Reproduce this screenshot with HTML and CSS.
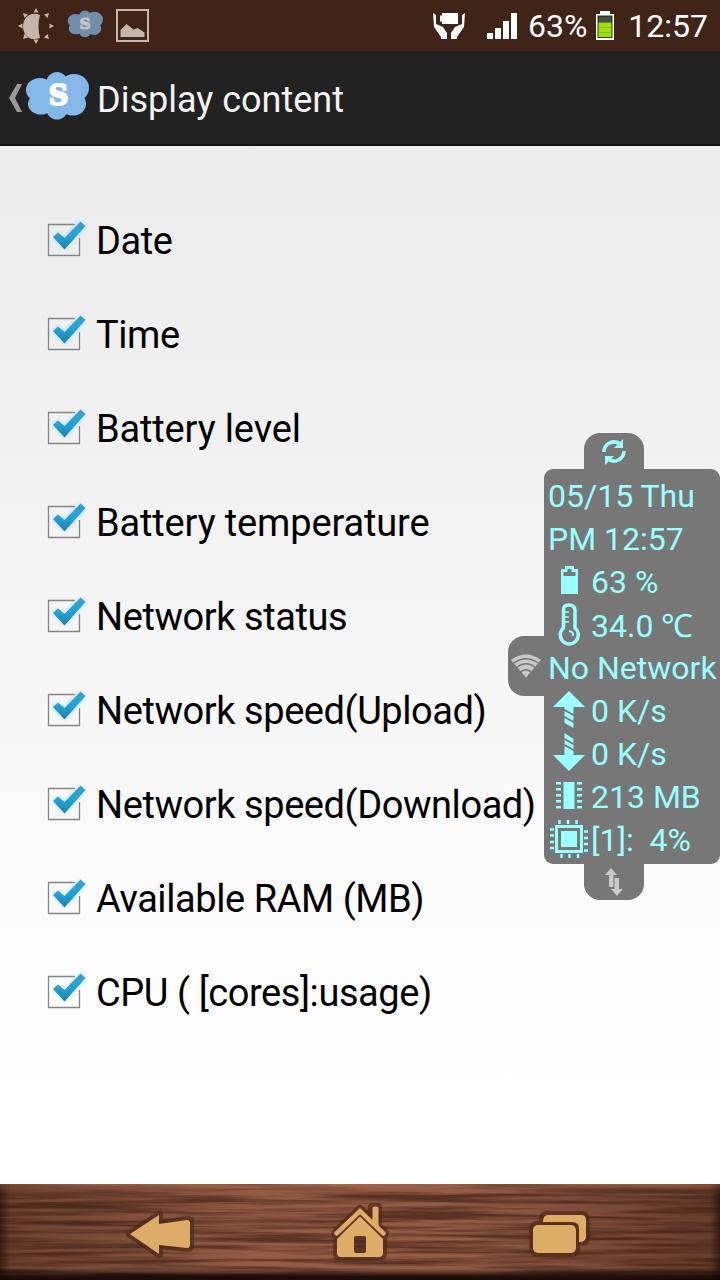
FILE: index.html
```html
<!DOCTYPE html>
<html lang="en">
<head>
<meta charset="utf-8">
<meta name="viewport" content="width=device-width, initial-scale=1">
<title>Display content</title>
<link rel="stylesheet" href="styles.css">
</head>
<body>

<!-- shared shapes -->
<svg class="defs" width="0" height="0">
  <defs>
    <linearGradient id="tick" x1="0" y1="0" x2="0" y2="1">
      <stop offset="0" stop-color="#3a9fca"/>
      <stop offset=".5" stop-color="#1ea4d8"/>
      <stop offset="1" stop-color="#2380a8"/>
    </linearGradient>
    <filter id="glow" x="-30%" y="-30%" width="160%" height="160%">
      <feGaussianBlur stdDeviation="2.5"/>
    </filter>
  </defs>
  <symbol id="check" viewBox="0 0 48 48">
    <path d="M31 8.500H4.500V39.500H35.500V22" fill="none" stroke="#858585" stroke-width="1.300"/>
    <path d="M9 21l5-4 6 6L36 6l5 4-20 23z" fill="#7fd0f5" opacity=".65" filter="url(#glow)"/>
    <path d="M9 21l5-4.500 6.500 5.500L36.500 5.500l5 4.500L20.500 33.500z" fill="url(#tick)"/>
  </symbol>
  <symbol id="cloud" viewBox="0 0 64 50">
    <g fill="#83b8e8">
      <ellipse cx="15" cy="19" rx="14" ry="12"/>
      <ellipse cx="32" cy="13" rx="11" ry="12"/>
      <ellipse cx="49" cy="17" rx="15" ry="14"/>
      <ellipse cx="16" cy="33" rx="13" ry="10.500"/>
      <ellipse cx="32" cy="37" rx="11" ry="11.500"/>
      <ellipse cx="48" cy="33" rx="13" ry="11.500"/>
      <rect x="12" y="12" width="40" height="26"/>
    </g>
  </symbol>
</svg>

<div class="screen">

  <div class="statusbar">
    <div class="notifications">
      <svg width="36" height="36" viewBox="0 0 36 36" fill="#c6b5ac">
        <path d="M22 7C12 3 5 10 5 18.500S12 34 22 30Q19 18 22 7z"/>
        <path d="M15.500 4.500L18 0l2.500 4.500zM15.500 31.500L18 36l2.500-4.500zM4.500 15.500L0 18l4.500 2.500zM31.500 15.500L36 18l-4.500 2.500zM5 5l5 1.500L6.500 10zM31 5l-1.500 5L26 6.500zM31 31l-5-1.500 3.500-3.500zM5 31l1.500-5 3.500 3.500z"/>
      </svg>
      <svg class="dim" width="36" height="28" viewBox="0 0 64 50">
        <use href="#cloud" width="64" height="50"/>
        <text x="32.500" y="34" text-anchor="middle" class="cloud-letter">S</text>
      </svg>
      <svg width="33" height="33" viewBox="0 0 33 33">
        <rect x="1" y="1" width="31" height="31" fill="none" stroke="#c6b5ac" stroke-width="2"/>
        <path d="M4.500 28v-7l6-6 7 5.500 4-1.500 7 4.500V28z" fill="#c6b5ac"/>
      </svg>
    </div>
    <div class="system">
      <svg class="saver" width="34" height="28" viewBox="0 0 34 28" fill="#fff">
        <path d="M10 1h16v11H10v-2.500H8v-6h2zM1 1l3 2v9l7 3 4 6v6H9v-2L2 15zM33 1l-3 2v9l-7 3-4 6v6h6v-2l7-10z"/>
      </svg>
      <svg class="signal" width="30" height="28" viewBox="0 0 30 28" fill="#fff">
        <path d="M0 21h6v6H0zM8 16h6v11H8zM16 9h6v18h-6zM24 1h6v26h-6z"/>
      </svg>
      <span class="percent">63%</span>
      <svg class="battery" width="20" height="31" viewBox="0 0 20 31">
        <path d="M5 1h10v3h4v26H1V4h4z" fill="#fff"/>
        <rect x="2.500" y="5.500" width="15" height="22.500" fill="#28400b"/>
        <rect x="4" y="7" width="12" height="5" fill="#4b4b48"/>
        <rect x="3.500" y="12.500" width="13" height="14.500" fill="#9de00b"/>
        <path d="M4 17.500h12M4 22.500h12" stroke="#86c908"/>
      </svg>
      <span class="clock">12:57</span>
    </div>
  </div>

  <div class="appbar">
    <svg class="up" width="14" height="28" viewBox="0 0 14 28"><path d="M8 0h5L6 14l7 14H8L0 14z" fill="#999"/></svg>
    <svg class="logo" width="64" height="50" viewBox="0 0 64 50">
      <use href="#cloud" width="64" height="50"/>
      <text x="33.500" y="34" text-anchor="middle" class="cloud-letter">S</text>
    </svg>
    <h1>Display content</h1>
  </div>

  <ul class="options">
    <li class="tight"><svg class="checkbox"><use href="#check"/></svg><span>Date</span></li>
    <li class="tight"><svg class="checkbox"><use href="#check"/></svg><span>Time</span></li>
    <li><svg class="checkbox"><use href="#check"/></svg><span>Battery level</span></li>
    <li><svg class="checkbox"><use href="#check"/></svg><span>Battery temperature</span></li>
    <li class="tight"><svg class="checkbox"><use href="#check"/></svg><span>Network status</span></li>
    <li class="tight"><svg class="checkbox"><use href="#check"/></svg><span>Network speed(Upload)</span></li>
    <li class="tight"><svg class="checkbox"><use href="#check"/></svg><span>Network speed(Download)</span></li>
    <li class="tight"><svg class="checkbox"><use href="#check"/></svg><span>Available RAM (MB)</span></li>
    <li class="tight"><svg class="checkbox"><use href="#check"/></svg><span>CPU ( [cores]:usage)</span></li>
  </ul>

  <div class="navbar">
    <svg class="wood" width="720" height="96" viewBox="0 0 720 96">
      <defs>
        <filter id="grain" x="0" y="0" width="100%" height="100%" color-interpolation-filters="sRGB">
          <feTurbulence type="fractalNoise" baseFrequency=".006 .2" numOctaves="5" seed="21"/>
          <feColorMatrix values="0 0 0 0 .24  0 0 0 0 .11  0 0 0 0 .07  3 0 0 0 -1.100"/>
        </filter>
        <linearGradient id="sides">
          <stop offset="0" stop-color="#1a0a05" stop-opacity=".7"/>
          <stop offset=".015" stop-color="#2a120a" stop-opacity=".35"/>
          <stop offset=".35" stop-color="#2a120a" stop-opacity="0"/>
          <stop offset=".65" stop-color="#2a120a" stop-opacity="0"/>
          <stop offset=".985" stop-color="#2a120a" stop-opacity=".4"/>
          <stop offset="1" stop-color="#1a0a05" stop-opacity=".75"/>
        </linearGradient>
        <linearGradient id="bottom" x1="0" y1="0" x2="0" y2="1">
          <stop offset="0" stop-color="#c08060" stop-opacity=".4"/>
          <stop offset=".12" stop-color="#7a4630" stop-opacity="0"/>
          <stop offset=".88" stop-color="#140804" stop-opacity="0"/>
          <stop offset=".96" stop-color="#140804" stop-opacity=".85"/>
          <stop offset="1" stop-color="#140804" stop-opacity=".95"/>
        </linearGradient>
      </defs>
      <rect width="720" height="96" fill="#935c45"/>
      <rect width="720" height="96" filter="url(#grain)" opacity=".65"/>
      <rect width="720" height="96" fill="url(#sides)"/>
      <rect width="720" height="96" fill="url(#bottom)"/>
    </svg>
    <div class="keys">
      <svg width="76" height="60" viewBox="0 0 76 60">
        <path class="carve" d="M7 32L36 13V22L65 18Q67 18 67 20V44Q67 46 65 46L36 43V52z"/>
        <path class="inlay" d="M7 32L36 13V22L64 18Q67 18 67 21V43Q67 46 64 46L36 43V52z"/>
      </svg>
      <svg width="76" height="60" viewBox="0 0 76 60">
        <path class="carve" d="M13 31L38 7L50 18V5H56V24L63 31L61 35V51Q61 55 57 55H19Q15 55 15 51V35z"/>
        <path class="inlay" fill-rule="evenodd" d="M15 37L38 14L61 37V51Q61 55 57 55H19Q15 55 15 51zM32 36v13q0 2 2 2h8q2 0 2-2V36q0-2-2-2h-8q-2 0-2 2z"/>
        <path d="M14 34.500L38 11.500L62 34.500" fill="none" stroke="#593019" stroke-width="4"/>
        <path class="inlay" d="M50.500 6q0-1.500 3-1.500t3 1.500v21l-6-6z"/>
        <path d="M14.500 31.500L38 9L61.500 31.500" fill="none" stroke="#ddad68" stroke-width="4.500" stroke-linecap="round"/>
      </svg>
      <svg width="76" height="60" viewBox="0 0 76 60">
        <path class="carve" d="M25 13h35q5 0 5 5v17q0 5-5 5h-5v6q0 5-5 5H17q-5 0-5-5V28q0-5 5-5h5v-5q0-5 3-5z"/>
        <path class="inlay" d="M22 20q0-7 5-7h33q5 0 5 5v17q0 5-7 5V27q0-7-7-7z"/>
        <rect x="12" y="23" width="43" height="28" rx="5" fill="none" stroke="#593019" stroke-width="5"/>
        <rect class="inlay" x="12" y="23" width="43" height="28" rx="5"/>
      </svg>
    </div>
  </div>

  <!-- floating monitor, sits over the list -->
  <div class="monitor">
    <div class="tab tab-top">
      <svg width="26" height="28" viewBox="0 0 26 28" fill="none" stroke="#99ffff" stroke-width="3.500">
        <path d="M3 15A10 10 0 0 1 19 7M23 14A10 10 0 0 1 7 22"/>
        <path d="M22 2v9h-9zM4 28v-9h9z" fill="#99ffff" stroke="none"/>
      </svg>
    </div>
    <div class="tab tab-left">
      <svg width="30" height="24" viewBox="0 0 30 24">
        <path d="M0 6Q15-5 30 6L15 23.500z" fill="#c9c9c9"/>
        <path d="M2 9.500Q15 0 28 9.500M5 14Q15 5.500 25 14M9 18.500Q15 13 21 18.500" fill="none" stroke="#777" stroke-width="1.300"/>
      </svg>
    </div>
    <div class="panel">
      <div class="line date">05/15 Thu</div>
      <div class="line time">PM 12:57</div>
      <div class="line">
        <svg viewBox="0 0 40 43"><path d="M16 6h9v3h4v25H12V9h4z"/><path d="M14.500 12h4V9h4v3h4v4h-12z" fill="#777"/></svg>
        <span>63 %</span>
      </div>
      <div class="line">
        <svg viewBox="0 0 40 43">
          <path d="M14.500 25V7Q14.500 2 20 2T26 7V25A9 9 0 1 1 14.500 25z" fill="none" stroke="#99ffff" stroke-width="3.500"/>
          <path d="M16 9h4M16 14h4M16 19h4" stroke="#99ffff" stroke-width="1.500"/>
          <path d="M20 28Q25 29 24 33" fill="none" stroke="#99ffff" stroke-width="2"/>
        </svg>
        <span>34.0 ℃</span>
      </div>
      <div class="line network">No Network</div>
      <div class="line">
        <svg viewBox="0 0 40 43"><path d="M20 2L36 18H24.500V25L15.500 20V18H4zM15.500 22l9 5v5l-9-5zM15.500 29l9 5v5l-9-5z"/></svg>
        <span>0 K/s</span>
      </div>
      <div class="line">
        <svg viewBox="0 0 40 43"><path d="M20 39L4 23H15.500V14L24.500 19V23H36zM15.500 8l9 5v4l-9-5zM15.500 1l9 6v4l-9-5z"/></svg>
        <span>0 K/s</span>
      </div>
      <div class="line">
        <svg viewBox="0 0 40 43"><path d="M14.500 7h11v27h-11zM7 7h5v2.500H7zM7 13h5v2.500H7zM7 19h5v2.500H7zM7 25h5v2.500H7zM7 31h5v2.500H7zM28 7h5v2.500h-5zM28 13h5v2.500h-5zM28 19h5v2.500h-5zM28 25h5v2.500h-5zM28 31h5v2.500h-5z"/></svg>
        <span>213 MB</span>
      </div>
      <div class="line">
        <svg viewBox="0 0 40 43">
          <path d="M12 13h16v16H12z"/>
          <rect x="7.500" y="8.500" width="25" height="25" fill="none" stroke="#99ffff" stroke-width="3"/>
          <path d="M10.500 2v4M19 2v4M27.500 2v4M12.500 36v4M20.500 36v4M29 36v4M1 11.500h4M1 17.500h4M1 24h4M1 30h4M35 13.500h4M35 20h4M35 26h4M35 32.500h4" stroke="#99ffff" stroke-width="2.500"/>
        </svg>
        <span>[1]:&nbsp; 4%</span>
      </div>
    </div>
    <div class="tab tab-bottom">
      <svg width="18" height="28" viewBox="0 0 18 28" fill="#c9c9c9">
        <path d="M6 0l6 7H8.500v12H4V7H0zM12 28l-6-7h3.500V10H14v11h4z"/>
      </svg>
    </div>
  </div>

</div>

</body>
</html>
```
FILE: styles.css
```css
body {
  margin: 0;
  font-family: Roboto, "Liberation Sans", sans-serif;
}

.defs {
  position: absolute;
}

.screen {
  position: relative;
  width: 720px;
  height: 1280px;
  display: flex;
  flex-direction: column;
  overflow: hidden;
  background: linear-gradient(#ebebeb 146px, #fff 1100px);
}

/* status bar */
.statusbar {
  height: 51px;
  display: flex;
  justify-content: space-between;
  background: #402418;
  color: #fff;
  font-size: 32px;
}

.notifications {
  display: flex;
  align-items: center;
  gap: 13px;
  padding-left: 18px;
}

.dim {
  opacity: .72;
  margin-top: -3px;
}

.system {
  display: flex;
  align-items: center;
  padding-right: 12px;
}

.signal {
  margin-left: 21px;
}

.percent {
  margin-left: 11px;
}

.battery {
  margin: 0 13px 0 8px;
}

.cloud-letter {
  font-family: "DejaVu Serif", serif;
  font-weight: bold;
  font-size: 27px;
  fill: #fff;
  stroke: #fff;
  stroke-width: 2px;
}

/* title bar */
.appbar {
  height: 95px;
  box-sizing: border-box;
  display: flex;
  align-items: center;
  padding-left: 9px;
  background: #222;
  border-bottom: 2px solid #151515;
  color: #f3f3f3;
}

.logo {
  margin: 0 8px 4px 2px;
}

h1 {
  margin: 5px 0 0;
  font-size: 36px;
  font-weight: 400;
}

/* check list */
.options {
  flex: 1;
  margin: 0;
  padding: 47px 0 0 44px;
  list-style: none;
  font-size: 38px;
  letter-spacing: -.15px;
  color: #000;
}

.options li {
  height: 94px;
  display: flex;
  align-items: center;
  gap: 4px;
}

.options .tight {
  letter-spacing: -.43px;
}

.options span {
  padding-top: 2px;
}

.checkbox {
  width: 48px;
  height: 48px;
}

/* wooden navigation bar */
.navbar {
  height: 96px;
  display: grid;
}

.wood,
.keys {
  grid-area: 1 / 1;
}

.keys {
  z-index: 1;
  display: flex;
  justify-content: center;
  align-items: center;
  gap: 123px;
}

.carve {
  fill: #4c2818;
  stroke: #4c2818;
  stroke-width: 8px;
  stroke-linejoin: round;
  opacity: .65;
}

.inlay {
  fill: #ddad68;
}

/* floating monitor */
.monitor {
  position: absolute;
  top: 433px;
  right: 0;
  width: 176px;
  color: #9ff;
  font-size: 32px;
}

.tab {
  width: 60px;
  height: 36px;
  margin-left: 40px;
  display: flex;
  align-items: center;
  justify-content: center;
  background: #777;
}

.tab-top {
  border-radius: 16px 16px 0 0;
}

.tab-bottom {
  border-radius: 0 0 16px 16px;
}

.tab-left {
  position: absolute;
  top: 203px;
  left: -36px;
  width: 36px;
  height: 60px;
  margin: 0;
  border-radius: 16px 0 0 16px;
}

.panel {
  height: 395px;
  box-sizing: border-box;
  padding: 5px 0 0 4px;
  border-radius: 9px;
  background: #777;
}

.line {
  height: 43px;
  display: flex;
  align-items: center;
  white-space: nowrap;
}

.line svg {
  width: 40px;
  height: 43px;
  flex: none;
  margin: 0 2px 0 1px;
  fill: #9ff;
}
```
